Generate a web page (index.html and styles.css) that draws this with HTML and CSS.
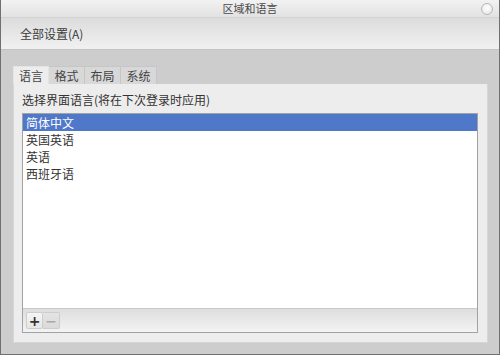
FILE: index.html
```html
<!DOCTYPE html>
<html lang="zh-CN">
<head>
    <meta charset="UTF-8">
    <title>区域和语言</title>
    <link rel="stylesheet" href="styles.css">
</head>
<body>
    <div class="window">
        <header class="titlebar">
            <span></span>
            <h1 class="title">区域和语言</h1>
            <span class="close"></span>
        </header>
        <div class="toolbar">
            <span class="all-settings">全部设置(A)</span>
        </div>
        <main class="content">
            <nav class="tabs">
                <div class="tab active">语言</div>
                <div class="tab">格式</div>
                <div class="tab">布局</div>
                <div class="tab">系统</div>
            </nav>
            <section class="panel">
                <p class="label">选择界面语言(将在下次登录时应用)</p>
                <div class="list-box">
                    <ul class="lang-list">
                        <li class="selected">简体中文</li>
                        <li>英国英语</li>
                        <li>英语</li>
                        <li>西班牙语</li>
                    </ul>
                    <div class="list-bar">
                        <button class="tool-btn">+</button>
                        <button class="tool-btn disabled">&minus;</button>
                    </div>
                </div>
            </section>
        </main>
    </div>
</body>
</html>
```

FILE: styles.css
```css
body {
    margin: 0;
    font-family: "Noto Sans CJK SC", "Noto Sans", sans-serif;
    font-size: 12px;
    color: #3c3c3c;
}

.window {
    box-sizing: border-box;
    width: 500px;
    height: 355px;
    display: flex;
    flex-direction: column;
    border: 1px solid #707070;
    border-top: none;
    background-color: #cdcdcd;
}

.titlebar {
    height: 17px;
    display: grid;
    grid-template-columns: 1fr auto 1fr;
    align-items: center;
    background: linear-gradient(#f2f2f2, #e2e2e2);
    border-bottom: 1px solid #d2d2d2;
}

.title {
    margin: 0;
    font-size: 11px;
    font-weight: normal;
    color: #4a4a4a;
    line-height: 17px;
}

.close {
    justify-self: end;
    margin-right: 6px;
    width: 10px;
    height: 10px;
    border-radius: 50%;
    border: 1px solid #b8b8b8;
    background: radial-gradient(circle at 50% 40%, #ffffff, #e4e4e4);
}

.toolbar {
    height: 31px;
    display: flex;
    align-items: center;
    padding-left: 19px;
    background: linear-gradient(#dcdcdc, #f1f1f1);
    border-bottom: 1px solid #c4c4c4;
}

.all-settings {
    font-size: 12px;
    color: #3a3a3a;
}

.content {
    flex: 1;
    display: flex;
    flex-direction: column;
    padding: 16px 11px 11px 12px;
}

.tabs {
    display: flex;
    height: 18px;
}

.tab {
    width: 36px;
    box-sizing: border-box;
    text-align: center;
    line-height: 17px;
    background-color: #d8d8d8;
    border: 1px solid #c6c6c6;
    border-bottom: none;
    border-left: none;
    color: #444;
}

.tab:first-child {
    border-left: 1px solid #c6c6c6;
}

.tab.active {
    background-color: #ededed;
    border-color: #e4e4e4;
}

.panel {
    flex: 1;
    display: flex;
    flex-direction: column;
    background-color: #ededed;
    border: 1px solid #d6d6d6;
    border-top: none;
    padding: 8px 9px 9px 8px;
}

.label {
    margin: 0 0 6px 0;
    line-height: 15px;
    color: #333;
}

.list-box {
    flex: 1;
    display: flex;
    flex-direction: column;
    border: 1px solid #a2a2a2;
    background-color: #fff;
}

.lang-list {
    flex: 1;
    list-style: none;
    margin: 0;
    padding: 0;
}

.lang-list li {
    height: 17px;
    line-height: 17px;
    padding-left: 3px;
    color: #333;
}

.lang-list li.selected {
    background-color: #5078c9;
    color: #fff;
}

.list-bar {
    height: 23px;
    display: flex;
    align-items: center;
    padding-left: 3px;
    border-top: 1px solid #c8c8c8;
    background: linear-gradient(#dedede, #f3f3f3);
}

.tool-btn {
    width: 17px;
    height: 17px;
    padding: 0;
    margin: 0;
    border: 1px solid #cdcdcd;
    border-radius: 2px;
    background: linear-gradient(#f6f6f6, #e6e6e6);
    font-family: "DejaVu Sans", sans-serif;
    font-size: 14px;
    font-weight: bold;
    line-height: 14px;
    color: #333;
}

.tool-btn + .tool-btn {
    border-left: none;
    border-radius: 0 2px 2px 0;
}

.tool-btn.disabled {
    color: #aaa;
    background: linear-gradient(#e4e4e4, #dadada);
}
```
